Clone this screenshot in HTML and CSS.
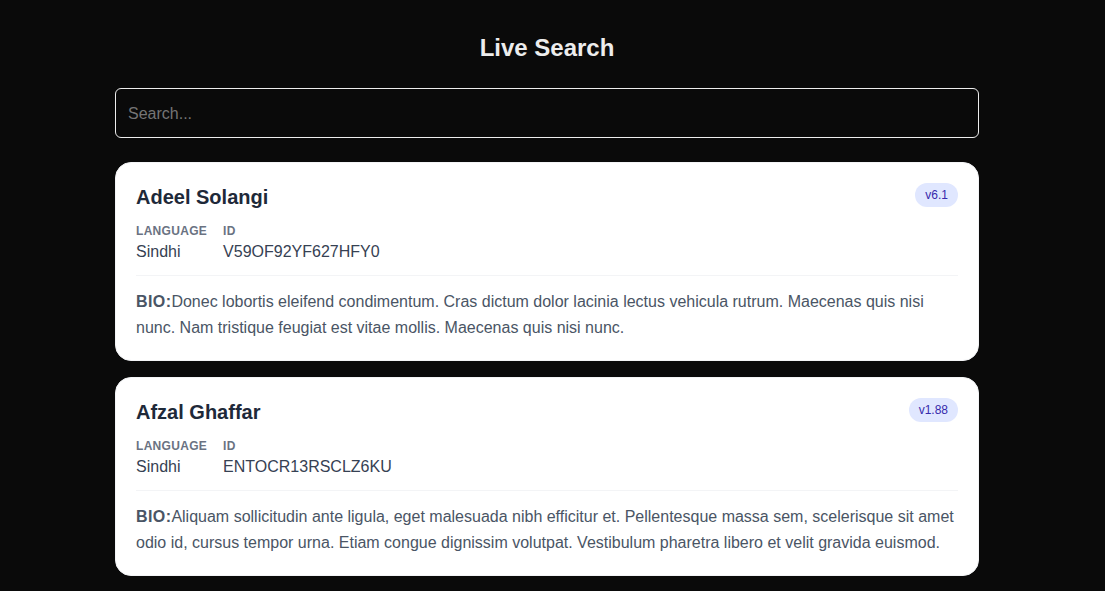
FILE: index.html
```html
<!DOCTYPE html>
<html lang="en">
<head>
<meta charset="utf-8">
<meta name="viewport" content="width=device-width, initial-scale=1">
<title>Live Search</title>
<link rel="stylesheet" href="styles.css">
</head>
<body>
<main class="page">
  <h1 class="page-title">Live Search</h1>
  <input class="search" type="search" placeholder="Search..." aria-label="Search">
  <ul class="results">
    <li class="card">
      <div class="card-header">
        <h2 class="card-name">Adeel Solangi</h2>
        <span class="badge">v6.1</span>
      </div>
      <dl class="meta">
        <div><dt class="meta-label">Language</dt><dd class="meta-value">Sindhi</dd></div>
        <div><dt class="meta-label">ID</dt><dd class="meta-value">V59OF92YF627HFY0</dd></div>
      </dl>
      <p class="bio"><span class="bio-label">Bio:</span>Donec lobortis eleifend condimentum. Cras dictum dolor lacinia lectus vehicula rutrum. Maecenas quis nisi nunc. Nam tristique feugiat est vitae mollis. Maecenas quis nisi nunc.</p>
    </li>
    <li class="card">
      <div class="card-header">
        <h2 class="card-name">Afzal Ghaffar</h2>
        <span class="badge">v1.88</span>
      </div>
      <dl class="meta">
        <div><dt class="meta-label">Language</dt><dd class="meta-value">Sindhi</dd></div>
        <div><dt class="meta-label">ID</dt><dd class="meta-value">ENTOCR13RSCLZ6KU</dd></div>
      </dl>
      <p class="bio"><span class="bio-label">Bio:</span>Aliquam sollicitudin ante ligula, eget malesuada nibh efficitur et. Pellentesque massa sem, scelerisque sit amet odio id, cursus tempor urna. Etiam congue dignissim volutpat. Vestibulum pharetra libero et velit gravida euismod.</p>
    </li>
  </ul>
</main>
</body>
</html>
```

FILE: styles.css
```css
* {
  box-sizing: border-box;
  margin: 0;
  padding: 0;
}

body {
  padding-right: 11px;
  background: #0a0a0a;
  color: #ededed;
  font-family: Arial, "Liberation Sans", Helvetica, sans-serif;
  font-size: 16px;
  line-height: 24px;
}

.page {
  max-width: 896px;
  margin: 0 auto;
  padding: 32px 16px 0;
}

.page-title {
  margin-bottom: 24px;
  font-size: 24px;
  line-height: 32px;
  text-align: center;
}

.search {
  display: block;
  width: 100%;
  margin-bottom: 24px;
  padding: 13px 12px 11px;
  border: 1px solid #ededed;
  border-radius: 6px;
  background: transparent;
  color: inherit;
  font: inherit;
  appearance: none;
}

.search::placeholder {
  color: #757575;
}

.results {
  display: flex;
  flex-direction: column;
  gap: 16px;
  list-style: none;
}

.card {
  padding: 20px 20px 19px;
  border: 1px solid #f3f4f6;
  border-radius: 16px;
  background: #ffffff;
}

.card-header {
  display: flex;
  align-items: flex-start;
  justify-content: space-between;
  margin-bottom: 12px;
}

.card-name {
  color: #1e2939;
  font-size: 20px;
  line-height: 28px;
}

.badge {
  padding: 4px 10px;
  border-radius: 12px;
  background: #e0e7ff;
  color: #372aac;
  font-size: 12px;
  line-height: 16px;
}

.meta {
  display: flex;
  gap: 16px;
  margin-bottom: 11px;
}

.meta-label {
  margin-bottom: 1px;
  color: #6a7282;
  font-size: 12px;
  font-weight: 700;
  line-height: 16px;
  letter-spacing: 0.025em;
  text-transform: uppercase;
}

.meta-value {
  color: #364153;
}

.bio {
  padding-top: 13px;
  border-top: 1px solid #f3f4f6;
  color: #4a5565;
  line-height: 26px;
}

.bio-label {
  font-weight: 700;
  letter-spacing: 0.025em;
  text-transform: uppercase;
}
```
